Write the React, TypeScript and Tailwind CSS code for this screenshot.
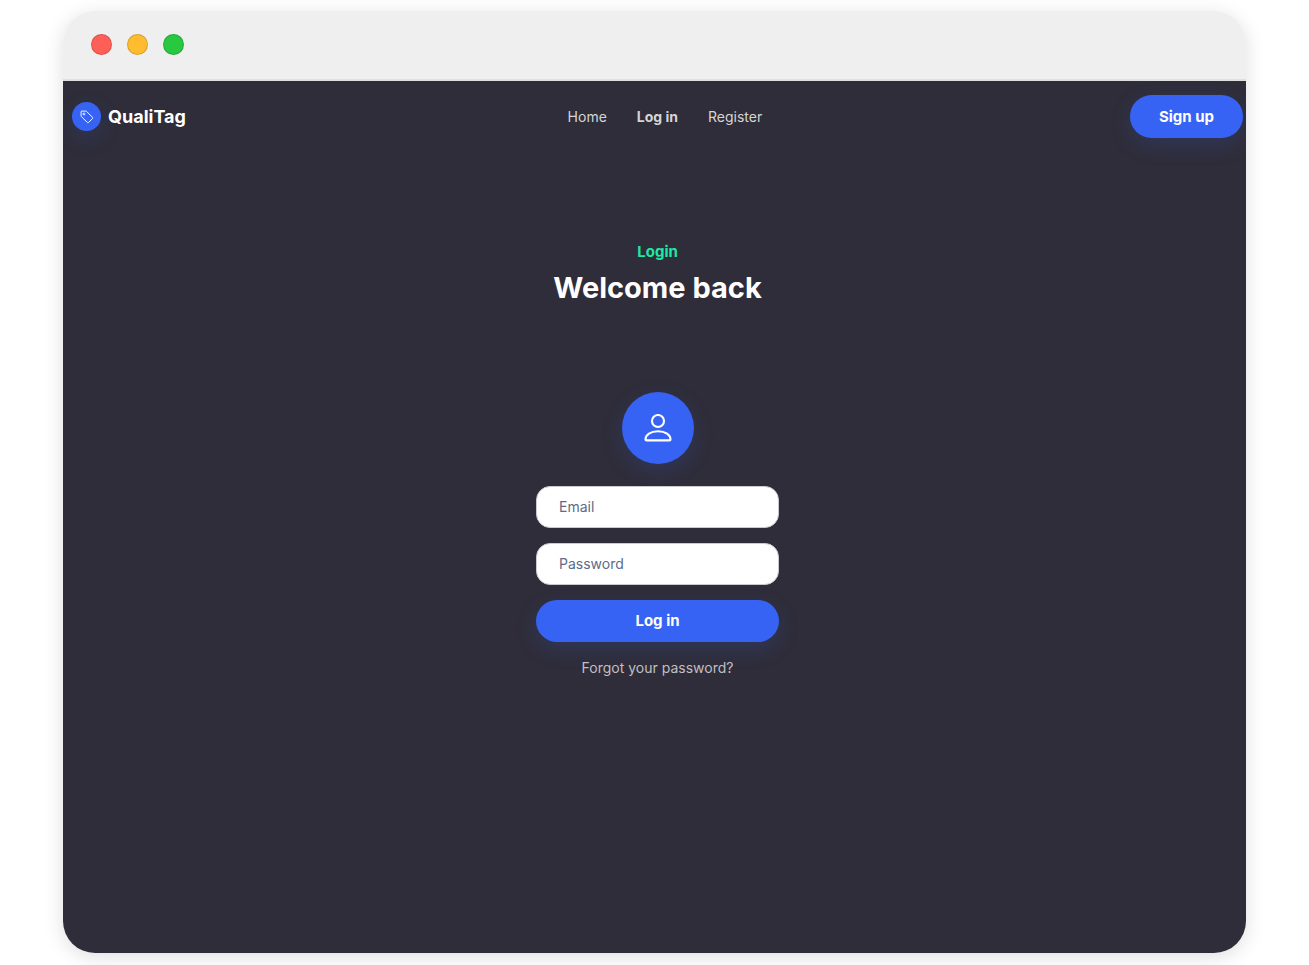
const lights = [
  { name: "red", className: "bg-[#ff5f57]" },
  { name: "yellow", className: "bg-[#febc2e]" },
  { name: "green", className: "bg-[#28c840]" },
];

function TagIcon() {
  return (
    <svg viewBox="0 0 14 14" className="size-[14px]" fill="none" stroke="currentColor" aria-hidden="true">
      <path
        d="M1.1 1.6a.5.5 0 0 1 .5-.5h4.3a.9.9 0 0 1 .6.25l6 6a.85.85 0 0 1 0 1.2l-3.95 3.95a.85.85 0 0 1-1.2 0l-6-6a.9.9 0 0 1-.25-.6z"
        strokeWidth="0.95"
        strokeLinejoin="round"
      />
      <circle cx="4" cy="4" r="0.95" strokeWidth="0.9" />
    </svg>
  );
}

function PersonIcon() {
  return (
    <svg viewBox="0 0 28 28" className="size-[28px]" fill="none" stroke="currentColor" strokeWidth="2.1" aria-hidden="true">
      <circle cx="14" cy="7" r="6" />
      <path
        d="M2.5 26.4h23a1 1 0 0 0 1-1c0-4.6-5-8.2-12.5-8.2S1.5 20.8 1.5 25.4a1 1 0 0 0 1 1z"
        strokeLinejoin="round"
      />
    </svg>
  );
}

function TitleBar() {
  return (
    <div className="flex h-[70px] items-center gap-[15px] rounded-t-[32px] border-b-2 border-[#dfe1e0] bg-[#efefef] px-[28px] pb-[2px]">
      {lights.map((light) => (
        <span
          key={light.name}
          className={`size-[21px] rounded-full border border-black/15 ${light.className}`}
        />
      ))}
    </div>
  );
}

function Header() {
  return (
    <header className="flex items-center justify-between pt-[14px] pr-[3px] pl-[9px]">
      <a href="#" className="flex items-center gap-[7px] text-[18px] leading-7 font-bold text-white">
        <span className="flex size-[29px] items-center justify-center rounded-full bg-[#3763f4] shadow-[0_7px_21px_rgba(55,99,244,0.18)]">
          <TagIcon />
        </span>
        QualiTag
      </a>
      <nav className="flex flex-1 justify-center gap-[30px] pl-[14px] text-[14px] text-[#d5d5d7]">
        <a href="#">Home</a>
        <a href="#" className="font-bold">
          Log in
        </a>
        <a href="#">Register</a>
      </nav>
      <button className="h-[43px] rounded-[22px] bg-[#3763f4] px-[29px] text-[15px] font-bold text-white shadow-[0_7px_21px_rgba(55,99,244,0.18)]">
        Sign up
      </button>
    </header>
  );
}

function LoginForm() {
  const field =
    "h-[42px] w-full rounded-[14px] border border-[#c9cad0] bg-white px-[22px] pb-[2px] text-[14px] text-[#212529] placeholder:text-[#5c6b89]";
  return (
    <form className="mt-[22px] flex w-[243px] flex-col gap-[15px]" onSubmit={(e) => e.preventDefault()}>
      <input type="email" aria-label="Email" placeholder="Email" className={field} />
      <input type="password" aria-label="Password" placeholder="Password" className={field} />
      <button className="h-[42px] rounded-[22px] bg-[#3763f4] text-[15px] font-bold text-white shadow-[0_7px_21px_rgba(55,99,244,0.18)]">
        Log in
      </button>
      <a href="#" className="text-center text-[14px] text-[#c0bfc3]">
        Forgot your password?
      </a>
    </form>
  );
}

export default function App() {
  return (
    <div className="flex min-h-screen flex-col bg-white px-[63px] pt-[11px] pb-[12px] font-['Inter',sans-serif] leading-[22px]">
      <div className="flex flex-1 flex-col rounded-[32px] shadow-[0_4px_20px_rgba(0,0,0,0.13)]">
        <TitleBar />
        <div className="flex-1 overflow-hidden rounded-b-[32px] bg-[#2f2d39]">
          <Header />
          <main className="flex flex-col items-center pt-[103px] pr-[3px] pl-[9px]">
            <p className="text-[15px] font-bold text-[#1de9a6]">Login</p>
            <h1 className="mt-[7px] text-[29px] leading-9 font-bold text-white">Welcome back</h1>
            <div className="mt-[86px] flex size-[72px] items-center justify-center rounded-full bg-[#3763f4] text-white shadow-[0_7px_21px_rgba(55,99,244,0.18)]">
              <PersonIcon />
            </div>
            <LoginForm />
          </main>
        </div>
      </div>
    </div>
  );
}
